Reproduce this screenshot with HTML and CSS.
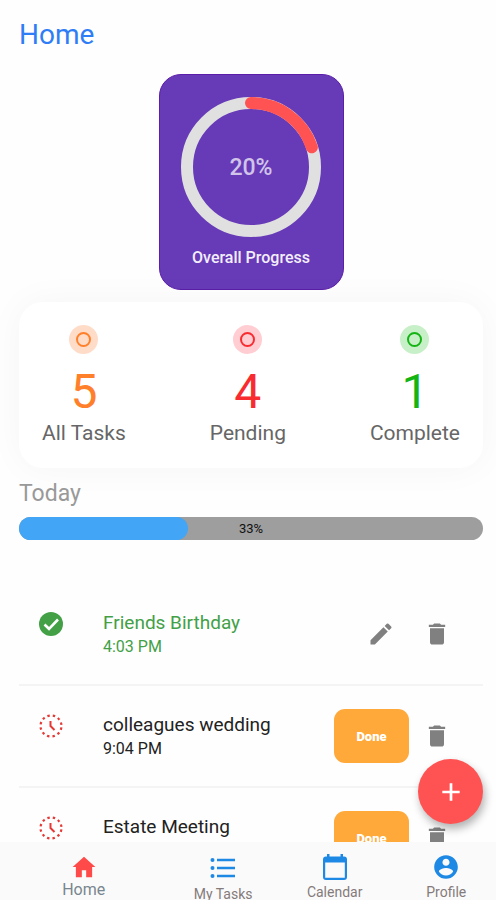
FILE: index.html
```html
<!DOCTYPE html>
<html lang="en">
<head>
	<meta charset="UTF-8">
	<meta name="viewport" content="width=device-width, initial-scale=1">
	<title>Home</title>
	<link rel="stylesheet" href="styles.css">
</head>
<body>
	<!-- shared icons -->
	<svg class="icon-defs" aria-hidden="true">
		<symbol id="ic-trash" viewBox="0 0 24 24">
			<path d="M6 19c0 1.100.9 2 2 2h8c1.100 0 2-.9 2-2V7H6v12zM19 4h-3.500l-1-1h-5l-1 1H5v2h14V4z"/>
		</symbol>
		<symbol id="ic-pending" viewBox="0 0 24 24">
			<circle cx="12" cy="12" r="10.500" fill="none" stroke="currentColor" stroke-width="2.200" stroke-dasharray="2.400 3.098" stroke-dashoffset="-1.500"/>
			<path d="M11.500 7v5l4 4" fill="none" stroke="currentColor" stroke-width="2"/>
		</symbol>
	</svg>

	<main>
		<h1>Home</h1>

		<!-- overall progress -->
		<section class="progress-card">
			<div class="ring">
				<svg viewBox="0 0 140 140">
					<circle class="ring-track" cx="70" cy="70" r="64"/>
					<circle class="ring-value" cx="70" cy="70" r="64" pathLength="100" stroke-dasharray="20 80" transform="rotate(-90 70 70)"/>
				</svg>
				<span class="ring-text">20%</span>
			</div>
			<p>Overall Progress</p>
		</section>

		<!-- counters -->
		<section class="stats">
			<div class="stat all">
				<span class="dot"></span>
				<strong>5</strong>
				<span class="stat-label">All Tasks</span>
			</div>
			<div class="stat pending">
				<span class="dot"></span>
				<strong>4</strong>
				<span class="stat-label">Pending</span>
			</div>
			<div class="stat complete">
				<span class="dot"></span>
				<strong>1</strong>
				<span class="stat-label">Complete</span>
			</div>
		</section>

		<h2>Today</h2>
		<div class="bar">
			<div class="bar-fill" style="width: 36.5%"></div>
			<span class="bar-text">33%</span>
		</div>

		<!-- task list -->
		<ul class="tasks">
			<li class="task done">
				<svg class="state" viewBox="0 0 24 24">
					<circle cx="12" cy="12" r="12" fill="currentColor"/>
					<path d="M5.500 12.500l4.500 4.300 9-9.300" fill="none" stroke="#fff" stroke-width="2.600"/>
				</svg>
				<div class="task-text">
					<h3>Friends Birthday</h3>
					<time>4:03 PM</time>
				</div>
				<button type="button" class="icon-btn" aria-label="Edit">
					<svg viewBox="0 0 24 24"><path d="M3 17.250V21h3.750L17.810 9.940l-3.750-3.750L3 17.250zM20.710 7.040a1 1 0 0 0 0-1.410l-2.340-2.340a1 1 0 0 0-1.410 0l-1.830 1.830 3.750 3.750 1.830-1.830z"/></svg>
				</button>
				<button type="button" class="icon-btn" aria-label="Delete"><svg><use href="#ic-trash"/></svg></button>
			</li>
			<li class="task">
				<svg class="state"><use href="#ic-pending"/></svg>
				<div class="task-text">
					<h3>colleagues wedding</h3>
					<time>9:04 PM</time>
				</div>
				<button type="button" class="done-btn">Done</button>
				<button type="button" class="icon-btn" aria-label="Delete"><svg><use href="#ic-trash"/></svg></button>
			</li>
			<li class="task">
				<svg class="state"><use href="#ic-pending"/></svg>
				<div class="task-text">
					<h3>Estate Meeting</h3>
				</div>
				<button type="button" class="done-btn">Done</button>
				<button type="button" class="icon-btn" aria-label="Delete"><svg><use href="#ic-trash"/></svg></button>
			</li>
		</ul>
	</main>

	<button type="button" class="fab" aria-label="Add task">
		<svg viewBox="0 0 24 24"><path d="M12 4v16M4 12h16" stroke="#fff" stroke-width="2.500"/></svg>
	</button>

	<nav>
		<a href="#home" class="active">
			<svg viewBox="0 0 24 24"><path d="M10 21.500v-6.500h4v6.500h5.500V12H22.500L12 2.500 1.500 12H4.500v9.500z"/></svg>
			Home
		</a>
		<a href="#tasks" class="nav-tasks">
			<svg viewBox="0 0 28 28">
				<circle cx="3.500" cy="6" r="2"/><circle cx="3.500" cy="14" r="2"/><circle cx="3.500" cy="22" r="2"/>
				<path d="M8 4.800h18v2.500H8zM8 12.800h18v2.500H8zM8 20.800h18v2.500H8z"/>
			</svg>
			My Tasks
		</a>
		<a href="#calendar">
			<svg viewBox="0 0 26 26"><path d="M22 2.500h-1V0h-2.500v2.500h-11V0H5v2.500H4A3 3 0 0 0 1 5.500v17.500a3 3 0 0 0 3 3h18a3 3 0 0 0 3-3V5.500a3 3 0 0 0-3-3zM22.800 23.700H3.200V8.500h19.600z"/></svg>
			Calendar
		</a>
		<a href="#profile">
			<svg viewBox="1 1 22 22"><path d="M12 2C6.480 2 2 6.480 2 12s4.480 10 10 10 10-4.480 10-10S17.520 2 12 2zm0 3c1.660 0 3 1.340 3 3s-1.340 3-3 3-3-1.340-3-3 1.340-3 3-3zm0 14.200c-2.500 0-4.710-1.280-6-3.220.03-1.990 4-3.080 6-3.080 1.990 0 5.970 1.090 6 3.080-1.290 1.940-3.500 3.220-6 3.220z"/></svg>
			Profile
		</a>
	</nav>
</body>
</html>
```

FILE: styles.css
```css
*,
*::before {
	box-sizing: border-box;
	margin: 0;
	padding: 0;
}

body {
	display: flex;
	flex-direction: column;
	height: 100vh;
	overflow: hidden;
	background-color: #fefefe;
	font-family: Roboto, "Liberation Sans", sans-serif;
	color: #222;
}

button {
	border: none;
	background: none;
	font-family: inherit;
	cursor: pointer;
}

svg {
	display: block;
}

.icon-defs {
	position: absolute;
	width: 0;
	height: 0;
}

main {
	flex: 1;
	min-height: 0;
	padding: 19px 13px 0 19px;
	overflow: hidden;
}

h1 {
	font-size: 28px;
	font-weight: 400;
	line-height: 32px;
	color: #2e7df6;
}

/* overall progress */
.progress-card {
	display: flex;
	flex-direction: column;
	align-items: center;
	gap: 11px;
	width: 185px;
	height: 216px;
	margin: 23px auto 0;
	padding-top: 22px;
	background-color: #673ab7;
	border: 1px solid #5a1ea8;
	border-radius: 22px;
}

.ring {
	display: grid;
	place-items: center;
	width: 140px;
	height: 140px;
}

.ring svg,
.ring-text {
	grid-area: 1 / 1;
}

.ring svg {
	width: 140px;
	height: 140px;
}

.ring circle {
	fill: none;
	stroke-width: 12;
}

.ring-track {
	stroke: #e0e0e0;
}

.ring-value {
	stroke: #ff5252;
	stroke-linecap: round;
}

.ring-text {
	font-size: 23px;
	font-weight: 500;
	color: #d1c4e9;
}

.progress-card p {
	font-size: 16px;
	line-height: 20px;
	font-weight: 500;
	color: #f3eefb;
}

/* counters */
.stats {
	display: flex;
	justify-content: space-between;
	margin-top: 12px;
	padding: 23px 23px 22px;
	background-color: #fff;
	border-radius: 24px;
	box-shadow: 0 0 36px rgba(0, 0, 0, 0.04);
}

.stat {
	display: flex;
	flex-direction: column;
	align-items: center;
}

.dot {
	display: grid;
	place-items: center;
	width: 29px;
	height: 29px;
	border-radius: 50%;
}

.dot::before {
	content: "";
	width: 15px;
	height: 15px;
	border: 2px solid currentColor;
	border-radius: 50%;
}

.stat strong {
	margin-top: 10px;
	font-size: 48px;
	font-weight: 400;
	line-height: 56px;
}

.stat-label {
	font-size: 21px;
	line-height: 26px;
	color: #666;
}

.all { color: #ff7f2a; }
.pending { color: #f82c30; }
.complete { color: #14b414; }
.all .dot { background-color: #ffdcc8; }
.pending .dot { background-color: #ffcdd2; }
.complete .dot { background-color: #c8f0c8; }

/* today */
h2 {
	margin-top: 12px;
	font-size: 23px;
	font-weight: 400;
	line-height: 28px;
	color: #999;
}

.bar {
	display: grid;
	align-items: center;
	height: 23px;
	margin-top: 9px;
	border-radius: 12px;
	background-color: #9e9e9e;
}

.bar-fill,
.bar-text {
	grid-area: 1 / 1;
}

.bar-fill {
	height: 100%;
	border-radius: 12px;
	background-color: #42a5f5;
}

.bar-text {
	justify-self: center;
	font-size: 13px;
	color: #111;
}

/* task list */
.tasks {
	margin-top: 44px;
	list-style: none;
}

.task {
	display: flex;
	align-items: center;
	height: 102px;
	padding: 0 32px 0 20px;
	border-bottom: 2px solid #f4f4f4;
}

.state {
	align-self: flex-start;
	width: 24px;
	height: 24px;
	margin-top: 28px;
	color: #e53935;
	overflow: visible;
}

.task-text {
	flex: 1;
	align-self: flex-start;
	margin: 26px 0 0 40px;
}

.task h3 {
	font-size: 19px;
	font-weight: 400;
	line-height: 26px;
}

.task time {
	display: block;
	font-size: 16px;
	line-height: 22px;
}

.done,
.done .state {
	color: #43a047;
}

.icon-btn {
	margin-left: 28px;
}

.done-btn + .icon-btn {
	margin-left: 14px;
}

.icon-btn svg {
	width: 28px;
	height: 28px;
	fill: #808080;
}

.done-btn {
	width: 75px;
	height: 54px;
	border-radius: 11px;
	background-color: #ffa93a;
	font-size: 13px;
	font-weight: 900;
	color: #fff;
}

.fab {
	position: fixed;
	right: 13px;
	bottom: 76px;
	display: grid;
	place-items: center;
	width: 65px;
	height: 65px;
	border-radius: 50%;
	background-color: #ff5252;
	box-shadow: 2px 5px 8px rgba(0, 0, 0, 0.3);
}

.fab svg {
	width: 26px;
	height: 26px;
}

/* bottom navigation, the active tab is wider */
nav {
	display: grid;
	grid-template-columns: 3fr 2fr 2fr 2fr;
	height: 58px;
	margin-right: -6px;
	padding-top: 12px;
	background-color: #fafafa;
}

nav a {
	display: flex;
	flex-direction: column;
	align-items: center;
	gap: 3px;
	font-size: 14px;
	line-height: 18px;
	color: #857a7a;
	text-decoration: none;
	white-space: nowrap;
}

nav svg {
	width: 26px;
	height: 26px;
	fill: #1e88e5;
}

nav .active {
	gap: 1px;
	font-size: 16px;
	color: #78868f;
}

nav .active svg {
	fill: #ff4a4a;
}

nav .nav-tasks svg {
	width: 28px;
	height: 28px;
}
```
